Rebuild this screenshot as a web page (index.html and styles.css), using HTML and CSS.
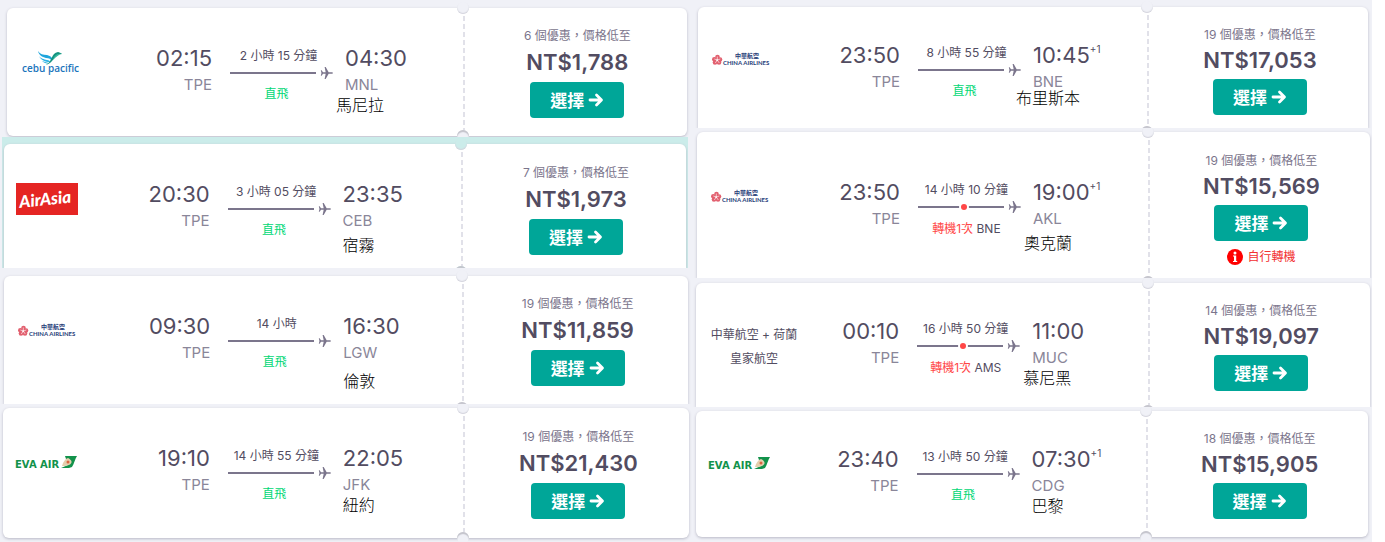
FILE: index.html
```html
<!DOCTYPE html>
<html lang="zh-Hant">
<head>
<meta charset="utf-8">
<meta name="viewport" content="width=device-width, initial-scale=1">
<title>航班搜尋結果</title>
<link rel="stylesheet" href="styles.css">
</head>
<body>
<svg class="sprite" aria-hidden="true">
  <symbol id="plane" viewBox="0 0 24 24"><path d="M24 12c0 .8-.8 1.300-2 1.300h-6L10.500 23H8.500l2-9.700h-5L3 17H1.500l1.200-5-1.200-5H3l2.500 3.700h5L8.500 1h2L16 10.700h6c1.200 0 2 .5 2 1.300z"/></symbol>
  <symbol id="arrow" viewBox="0 0 16 14"><path d="M2 7h11M8.500 2l5 5-5 5" fill="none" stroke="currentColor" stroke-width="2.800" stroke-linecap="round" stroke-linejoin="round"/></symbol>
</svg>
<main class="board">
  <section class="column">
    <div class="slot slot--first">
      <article class="card">
        <div class="flight">
          <svg class="logo" role="img" aria-label="cebu pacific" viewBox="0 0 62 26">
            <path d="M19 1c2 3 5 4 9 4 4 1 6 3 5 6-1-2-3-3-6-3-4-1-7-3-8-7z" fill="#1fa5dc"/>
            <path d="M20 6c2 3 5 3 8 4 2 0 3 1 3 2-5 0-9-2-11-6z" fill="#2cb3e4"/>
            <path d="M23 11c2 1 4 1 7 2-2 1-5 0-7-2z" fill="#2cb3e4"/>
            <path d="M28 14c5-2 4-11 11-12 1 0 3 1 4 2-8-1-7 8-16 11z" fill="#13937f"/>
            <path d="M35 7c2-3 5-4 8-3-3 0-6 3-9 6z" fill="#35b59b"/>
            <text class="cebu-name" x="3" y="22">cebu pacific</text>
          </svg>
          <div class="stop stop--from"><time>02:15</time><span class="code">TPE</span></div>
          <div class="route"><span class="duration">2 小時 15 分鐘</span><span class="track"><i class="line"></i><svg class="plane"><use href="#plane"/></svg></span><span class="direct">直飛</span></div>
          <div class="stop"><time>04:30</time><span class="code">MNL</span><span class="city city--wide">馬尼拉</span></div>
        </div>
        <div class="fare"><span class="offers">6 個優惠，價格低至</span><strong class="price">NT$1,788</strong><button class="select" type="button">選擇 <svg class="arrow"><use href="#arrow"/></svg></button></div>
      </article>
    </div>
    <div class="slot slot--active slot--cut">
      <article class="card">
        <div class="flight">
          <svg class="logo" role="img" aria-label="AirAsia" viewBox="0 0 62 32">
            <path d="M0 0h62v32H0z" fill="#e52523"/>
            <text class="airasia-name" x="3" y="22" transform="rotate(-6 31 16)">AirAsia</text>
          </svg>
          <div class="stop stop--from"><time>20:30</time><span class="code">TPE</span></div>
          <div class="route"><span class="duration">3 小時 05 分鐘</span><span class="track"><i class="line"></i><svg class="plane"><use href="#plane"/></svg></span><span class="direct">直飛</span></div>
          <div class="stop"><time>23:35</time><span class="code">CEB</span><span class="city city--low">宿霧</span></div>
        </div>
        <div class="fare"><span class="offers">7 個優惠，價格低至</span><strong class="price">NT$1,973</strong><button class="select" type="button">選擇 <svg class="arrow"><use href="#arrow"/></svg></button></div>
      </article>
    </div>
    <div class="slot slot--third slot--cut">
      <article class="card">
        <div class="flight">
          <svg class="logo" role="img" aria-label="中華航空" viewBox="0 0 62 14">
            <g fill="#e2606f"><circle cx="7.500" cy="4" r="2.300"/><circle cx="10" cy="6.500" r="2.300"/><circle cx="9" cy="9.500" r="2.300"/><circle cx="5" cy="9.500" r="2.300"/><circle cx="4.300" cy="6.300" r="2.300"/></g>
            <path d="M7.300 7V3.500M7.300 7l3-1M7.300 7l2 3M7.300 7l-2 3M7.300 7l-3-1" stroke="#fff" stroke-width=".6"/>
            <text class="china-han" x="25" y="5">中華航空</text>
            <text class="china-name" x="13" y="12">CHINA AIRLINES</text>
          </svg>
          <div class="stop stop--from"><time>09:30</time><span class="code">TPE</span></div>
          <div class="route"><span class="duration">14 小時</span><span class="track"><i class="line"></i><svg class="plane"><use href="#plane"/></svg></span><span class="direct">直飛</span></div>
          <div class="stop"><time>16:30</time><span class="code">LGW</span><span class="city city--lower">倫敦</span></div>
        </div>
        <div class="fare"><span class="offers">19 個優惠，價格低至</span><strong class="price">NT$11,859</strong><button class="select" type="button">選擇 <svg class="arrow"><use href="#arrow"/></svg></button></div>
      </article>
    </div>
    <div class="slot slot--last">
      <article class="card">
        <div class="flight">
          <svg class="logo" role="img" aria-label="EVA AIR" viewBox="0 0 62 16">
            <text class="eva-name" x="0" y="13">EVA AIR</text>
            <path d="M50 1h12c-2 3-3 8-5 11l-3 1H46l7-3z" fill="#12924b"/>
            <path d="M47 11c1-4 3-7 6-8 4 2 5 5 1 7-3 1-5 1-7 1z" fill="#e4cfae"/>
            <circle cx="53" cy="7" r="1.500" fill="#d9643f"/>
          </svg>
          <div class="stop stop--from"><time>19:10</time><span class="code">TPE</span></div>
          <div class="route"><span class="duration">14 小時 55 分鐘</span><span class="track"><i class="line"></i><svg class="plane"><use href="#plane"/></svg></span><span class="direct">直飛</span></div>
          <div class="stop"><time>22:05</time><span class="code">JFK</span><span class="city">紐約</span></div>
        </div>
        <div class="fare"><span class="offers">19 個優惠，價格低至</span><strong class="price">NT$21,430</strong><button class="select" type="button">選擇 <svg class="arrow"><use href="#arrow"/></svg></button></div>
      </article>
    </div>
  </section>
  <section class="column column--compact">
    <div class="slot slot--head slot--cut">
      <article class="card">
        <div class="flight">
          <svg class="logo" role="img" aria-label="中華航空" viewBox="0 0 62 14">
            <g fill="#e2606f"><circle cx="7.500" cy="4" r="2.300"/><circle cx="10" cy="6.500" r="2.300"/><circle cx="9" cy="9.500" r="2.300"/><circle cx="5" cy="9.500" r="2.300"/><circle cx="4.300" cy="6.300" r="2.300"/></g>
            <path d="M7.300 7V3.500M7.300 7l3-1M7.300 7l2 3M7.300 7l-2 3M7.300 7l-3-1" stroke="#fff" stroke-width=".6"/>
            <text class="china-han" x="25" y="5">中華航空</text>
            <text class="china-name" x="13" y="12">CHINA AIRLINES</text>
          </svg>
          <div class="stop stop--from"><time>23:50</time><span class="code">TPE</span></div>
          <div class="route"><span class="duration">8 小時 55 分鐘</span><span class="track"><i class="line"></i><svg class="plane"><use href="#plane"/></svg></span><span class="direct">直飛</span></div>
          <div class="stop"><time>10:45<sup>+1</sup></time><span class="code">BNE</span><span class="city city--widest">布里斯本</span></div>
        </div>
        <div class="fare"><span class="offers">19 個優惠，價格低至</span><strong class="price">NT$17,053</strong><button class="select" type="button">選擇 <svg class="arrow"><use href="#arrow"/></svg></button></div>
      </article>
    </div>
    <div class="slot slot--tall slot--cut">
      <article class="card">
        <div class="flight">
          <svg class="logo" role="img" aria-label="中華航空" viewBox="0 0 62 14">
            <g fill="#e2606f"><circle cx="7.500" cy="4" r="2.300"/><circle cx="10" cy="6.500" r="2.300"/><circle cx="9" cy="9.500" r="2.300"/><circle cx="5" cy="9.500" r="2.300"/><circle cx="4.300" cy="6.300" r="2.300"/></g>
            <path d="M7.300 7V3.500M7.300 7l3-1M7.300 7l2 3M7.300 7l-2 3M7.300 7l-3-1" stroke="#fff" stroke-width=".6"/>
            <text class="china-han" x="25" y="5">中華航空</text>
            <text class="china-name" x="13" y="12">CHINA AIRLINES</text>
          </svg>
          <div class="stop stop--from"><time>23:50</time><span class="code">TPE</span></div>
          <div class="route"><span class="duration">14 小時 10 分鐘</span><span class="track"><i class="line line--stop"></i><svg class="plane"><use href="#plane"/></svg></span><span class="transfer"><em>轉機1次</em> BNE</span></div>
          <div class="stop"><time>19:00<sup>+1</sup></time><span class="code">AKL</span><span class="city city--wide city--low">奧克蘭</span></div>
        </div>
        <div class="fare"><span class="offers">19 個優惠，價格低至</span><strong class="price">NT$15,569</strong><button class="select" type="button">選擇 <svg class="arrow"><use href="#arrow"/></svg></button>
          <span class="notice"><svg class="info" viewBox="0 0 16 16" aria-hidden="true"><circle cx="8" cy="8" r="8" fill="#f00"/><circle cx="8" cy="4" r="1.500" fill="#fff"/><path d="M6 6.500h3.200V12h1v1H6v-1h1V7.500H6z" fill="#fff"/></svg>自行轉機</span></div>
      </article>
    </div>
    <div class="slot slot--codeshare slot--cut">
      <article class="card">
        <div class="flight">
          <span class="carriers">中華航空 + 荷蘭皇家航空</span>
          <div class="stop stop--from"><time>00:10</time><span class="code">TPE</span></div>
          <div class="route"><span class="duration">16 小時 50 分鐘</span><span class="track"><i class="line line--stop"></i><svg class="plane"><use href="#plane"/></svg></span><span class="transfer"><em>轉機1次</em> AMS</span></div>
          <div class="stop"><time>11:00</time><span class="code">MUC</span><span class="city city--wide">慕尼黑</span></div>
        </div>
        <div class="fare"><span class="offers">14 個優惠，價格低至</span><strong class="price">NT$19,097</strong><button class="select" type="button">選擇 <svg class="arrow"><use href="#arrow"/></svg></button></div>
      </article>
    </div>
    <div class="slot slot--end">
      <article class="card">
        <div class="flight">
          <svg class="logo" role="img" aria-label="EVA AIR" viewBox="0 0 62 16">
            <text class="eva-name" x="0" y="13">EVA AIR</text>
            <path d="M50 1h12c-2 3-3 8-5 11l-3 1H46l7-3z" fill="#12924b"/>
            <path d="M47 11c1-4 3-7 6-8 4 2 5 5 1 7-3 1-5 1-7 1z" fill="#e4cfae"/>
            <circle cx="53" cy="7" r="1.500" fill="#d9643f"/>
          </svg>
          <div class="stop stop--from"><time>23:40</time><span class="code">TPE</span></div>
          <div class="route"><span class="duration">13 小時 50 分鐘</span><span class="track"><i class="line"></i><svg class="plane"><use href="#plane"/></svg></span><span class="direct">直飛</span></div>
          <div class="stop"><time>07:30<sup>+1</sup></time><span class="code">CDG</span><span class="city">巴黎</span></div>
        </div>
        <div class="fare"><span class="offers">18 個優惠，價格低至</span><strong class="price">NT$15,905</strong><button class="select" type="button">選擇 <svg class="arrow"><use href="#arrow"/></svg></button></div>
      </article>
    </div>
  </section>
</main>
</body>
</html>
```
FILE: styles.css
```css
* { box-sizing: border-box; }

body {
  margin: 0;
  padding-right: 13px;
  background: #fff;
  color: #524c61;
  font-family: Inter, "Noto Sans CJK TC", sans-serif;
}

.sprite { position: absolute; width: 0; height: 0; }

.board {
  display: grid;
  grid-template-columns: 692fr 680fr;
  align-items: start;
  min-height: 100vh;
  background: #f0f1f7;
}

/* Slots */
.slot { --gap: #f0f1f7; overflow: hidden; background: var(--gap); }
.slot--first { padding: 8px 5px 1px 7px; }
.slot--active { --gap: #cbecea; margin: 0 4px 0 2px; padding: 7px 2px 0; }
.slot--third { padding: 8px 4px 0; }
.slot--last { padding: 4px 3px; }
.slot--head { padding: 7px 4px 0 6px; }
.slot--tall { padding: 4px 2px 0 5px; }
.slot--codeshare { padding: 5px 2px 0 4px; }
.slot--end { padding: 4px 4px 4px; }

/* Ticket card */
.card {
  position: relative;
  display: grid;
  grid-template-columns: 67fr 33fr;
  border-radius: 6px;
  background: #fff;
  box-shadow: 0 1px 3px #b9b9c6;
}
.slot--cut .card { border-radius: 6px 6px 0 0; }
.card::before,
.card::after {
  content: "";
  position: absolute;
  left: 67%;
  width: 12px;
  height: 12px;
  margin-left: -6px;
  border-radius: 50%;
  background: var(--gap);
}
.card::before { top: -6px; box-shadow: inset 0 -1px 1px #d3d3dc; }
.card::after { bottom: -6px; box-shadow: inset 0 2px 1px #c3c3cb; }
.slot--cut .card::after { bottom: -10px; }

.flight {
  display: grid;
  grid-template-columns: 45% 103px 1fr;
  column-gap: 18px;
  align-items: start;
  padding-top: 34px;
}
.column--compact .flight { padding-top: 32px; }
.slot--tall .card .flight { padding-top: 44px; }
.flight > * { grid-row: 1; }

.logo,
.carriers { grid-column: 1; justify-self: start; }
.logo { width: 62px; margin-left: 12px; height: 42px; }
.carriers {
  width: 92px;
  margin-left: 12px;
  font-size: 12px;
  line-height: 24px;
  text-align: center;
  margin-top: 8px;
}

.stop { display: flex; flex-direction: column; margin-left: -6px; }
.stop--from { grid-column: 1; align-items: flex-end; margin-left: 0; }
.stop time { font-size: 22px; line-height: 32px; }
.stop sup { font-size: 10px; line-height: 1; vertical-align: 10px; }
.code { color: #8a8699; font-size: 15px; line-height: 22px; }

.city {
  margin-top: -1px;
  color: #000;
  font-size: 16px;
  font-weight: 300;
  line-height: 20px;
}
.city--low { margin-top: 3px; }
.city--lower { margin-top: 7px; }
.city--wide { margin-left: -9px; }
.city--widest { margin: -5px 0 0 -17px; }

.route { display: flex; flex-direction: column; align-items: center; }
.duration,
.direct,
.transfer { font-size: 12px; line-height: 18px; white-space: nowrap; }
.duration { margin-top: 5px; padding-right: 6px; }
.direct { margin-top: 4px; padding-right: 10px; color: #00d775; }
.transfer { margin-top: 5px; padding-right: 6px; }
.transfer em { color: #ff4747; font-style: normal; }

.track {
  display: flex;
  align-items: center;
  gap: 4px;
  width: 100%;
  height: 16px;
  color: #7b758c;
}
.line { position: relative; flex: 1; height: 2px; background: currentColor; }
.line--stop::after {
  content: "";
  position: absolute;
  top: -2px;
  left: 50%;
  width: 6px;
  height: 6px;
  border-radius: 50%;
  background: #ff4747;
  box-shadow: 0 0 0 2px #fff;
}
.plane { width: 13px; height: 14px; fill: currentColor; }

.fare {
  display: flex;
  flex-direction: column;
  align-items: center;
  padding: 19px 0 18px 5px;
  background: repeating-linear-gradient(#e1e1e9 0 5px, transparent 5px 8px) 0 0 / 2px 100% no-repeat;
}
.slot--active .fare { padding: 20px 0 13px 5px; }
.slot--last .fare { padding: 20px 0 19px 5px; }
.column--compact .fare { padding-bottom: 13px; }
.column--compact .slot--tall .fare { padding: 20px 0 12px 5px; }
.column--compact .slot--codeshare .fare { padding-bottom: 16px; }
.column--compact .slot--end .fare { padding-bottom: 18px; }

.offers { color: #7b758c; font-size: 12px; line-height: 18px; }
.price { margin-bottom: 3px; font-size: 22px; font-weight: 600; line-height: 34px; }
.column--compact .price { line-height: 32px; }

.select {
  display: flex;
  align-items: center;
  gap: 4px;
  height: 36px;
  padding: 0 20px;
  border: 0;
  border-radius: 4px;
  background: #00a698;
  color: #fff;
  font: 700 17px/24px "Noto Sans CJK TC", sans-serif;
  cursor: pointer;
}
.arrow { width: 16px; height: 14px; }

.notice {
  display: flex;
  align-items: center;
  gap: 4px;
  margin-top: 7px;
  color: #f23030;
  font-size: 12px;
  line-height: 18px;
}
.info { width: 16px; height: 16px; }

/* Airline marks */
.cebu-name { fill: #1c75bc; font: 600 10px "Open Sans", sans-serif; }
.airasia-name { fill: #fff; font: italic 900 17px Lato, sans-serif; }
.china-han { fill: #263c78; font: 700 6px "Noto Sans CJK TC", sans-serif; }
.china-name { fill: #263c78; font: 700 6px Lato, sans-serif; }
.eva-name { fill: #12924b; font: 700 10px "DejaVu Sans", sans-serif; }
```
